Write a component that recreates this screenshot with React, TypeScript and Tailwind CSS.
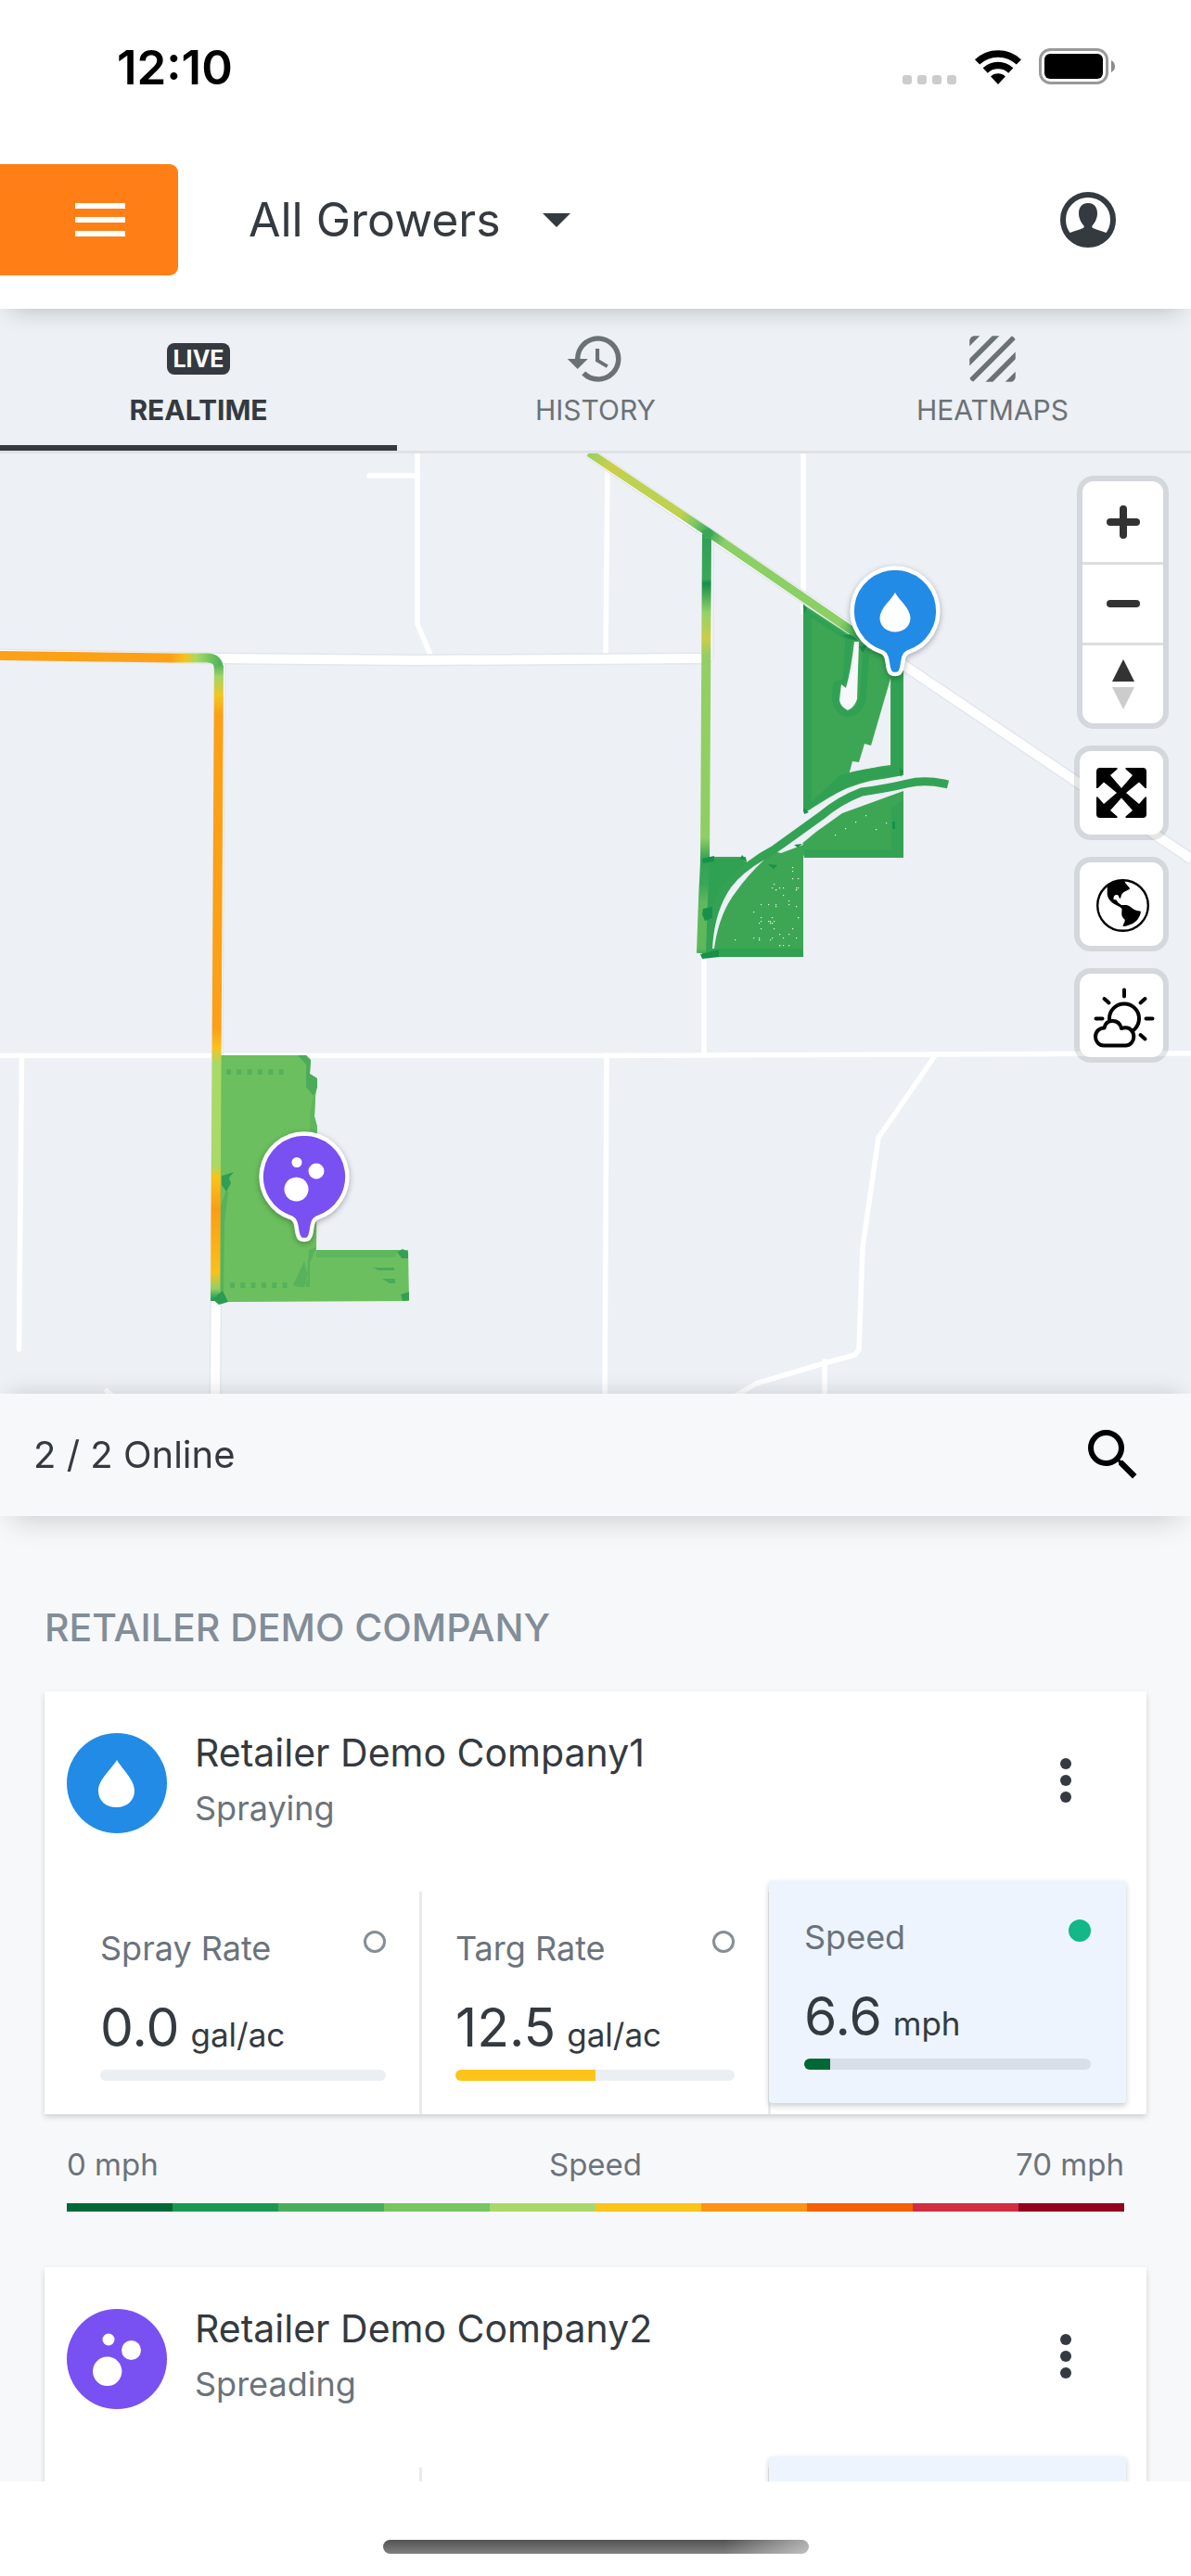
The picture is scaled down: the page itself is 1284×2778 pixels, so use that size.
import React, { useState } from 'react';
import { MdHistory, MdTexture, MdSearch } from 'react-icons/md';

type Kind = 'spray' | 'spread';

interface Metric {
  label: string;
  value: string;
  unit: string;
  percent: number;
  color: string;
}

interface Machine {
  id: string;
  name: string;
  status: string;
  kind: Kind;
  metrics?: Metric[];
}

const machines: Machine[] = [
  {
    id: 'm1',
    name: 'Retailer Demo Company1',
    status: 'Spraying',
    kind: 'spray',
    metrics: [
      { label: 'Spray Rate', value: '0.0', unit: 'gal/ac', percent: 0, color: '#006837' },
      { label: 'Targ Rate', value: '12.5', unit: 'gal/ac', percent: 50, color: '#fcc41b' },
      { label: 'Speed', value: '6.6', unit: 'mph', percent: 9, color: '#006837' },
    ],
  },
  // no readings received yet
  { id: 'm2', name: 'Retailer Demo Company2', status: 'Spreading', kind: 'spread' },
];

const scale = ['#006837', '#1a9850', '#48ae5b', '#76c462', '#a6d96a', '#fcc41b', '#fd9214', '#f66000', '#d22c43', '#930020'];

function StatusBar() {
  return (
    <div className="flex h-36 items-center justify-between pr-[82px] pl-[126px]">
      <span className="text-[51px] leading-none font-semibold text-black">12:10</span>
      <div className="flex items-center">
        <div className="mt-7 flex gap-[6px]">
          {[0, 1, 2, 3].map(i => (
            <span key={i} className="size-[10px] rounded-[3px] bg-[#cccccc]" />
          ))}
        </div>
        <svg viewBox="0 0 50 37" className="ml-5 h-[37px] w-[50px]" aria-hidden="true">
          <g fill="none" stroke="#000" strokeWidth="7.5">
            <path d="M2.6 12.9A32.5 32.5 0 0 1 47.4 12.9" />
            <path d="M11.2 22A20 20 0 0 1 38.8 22" />
          </g>
          <path d="M25 37L17.1 28.4A11.5 11.5 0 0 1 32.9 28.4Z" />
        </svg>
        <svg viewBox="0 0 82 40" className="ml-[19px] h-10 w-[82px]" aria-hidden="true">
          <rect x="1.5" y="1.5" width="72" height="36" rx="11" fill="none" stroke="#999" strokeWidth="3" />
          <rect x="6" y="6" width="63" height="27" rx="6" />
          <path d="M78 13v13q4-2 4-6.500t-4-6.500z" fill="#8c8c8c" />
        </svg>
      </div>
    </div>
  );
}

function Header() {
  return (
    <header className="relative z-20 bg-white shadow-[0_12px_24px_-12px_rgba(0,20,20,0.25)]">
      <StatusBar />
      <div className="flex items-center pt-[33px] pb-9">
        <button aria-label="Menu" className="flex h-[120px] w-48 items-center justify-end rounded-r-[9px] bg-[#ff7f16] pr-[57px]">
          <span className="flex w-[54px] flex-col gap-[9px]">
            <span className="h-[6px] bg-white" />
            <span className="h-[6px] bg-white" />
            <span className="h-[6px] bg-white" />
          </span>
        </button>
        <div className="relative ml-[76px] flex items-center">
          <select aria-label="Grower" className="h-[84px] w-[347px] appearance-none bg-transparent text-[50px] text-[#343a40]">
            <option>All Growers</option>
          </select>
          <svg viewBox="0 0 30 15" className="pointer-events-none absolute right-0 h-[15px] w-[30px]" aria-hidden="true">
            <path d="M0 0H30L15 15Z" fill="#343a40" />
          </svg>
        </div>
        <button aria-label="Account" className="mr-[81px] ml-auto">
          <svg viewBox="0 0 60 60" className="size-[60px]" fill="#343a40">
            <circle cx="30" cy="30" r="27" fill="none" stroke="#343a40" strokeWidth="6" />
            <path d="M30 12C36.500 12 40 16.500 40 23C40 29 37 33.500 34.500 36.500C34 38 34.500 38.500 35.500 39C40 41 46 42.500 50.500 44.500C45.500 52 38.500 57 30 57C21.500 57 14.500 52 9.500 44.500C14 42.500 20 41 24.500 39C25.500 38.500 26 38 25.500 36.500C23 33.500 20 29 20 23C20 16.500 23.500 12 30 12Z" />
          </svg>
        </button>
      </div>
    </header>
  );
}

function Tabs() {
  const [tab, setTab] = useState('REALTIME');
  const tabs = [
    {
      name: 'REALTIME',
      icon: <span className="rounded-lg bg-[#343a40] px-[6px] text-[25px] leading-[34px] font-bold text-white">LIVE</span>,
    },
    { name: 'HISTORY', icon: <MdHistory className="size-[66px]" /> },
    { name: 'HEATMAPS', icon: <MdTexture className="size-[66px]" /> },
  ];

  return (
    <div role="tablist" className="grid grid-cols-3 border-b-3 border-[#dee2e6] bg-[#edf0f5]">
      {tabs.map(t => (
        <button
          key={t.name}
          role="tab"
          aria-selected={t.name === tab}
          onClick={() => setTab(t.name)}
          className={`flex flex-col items-center border-b-6 pt-[21px] pb-4 ${
            t.name === tab ? 'border-[#343a40] font-bold text-[#343a40]' : 'border-transparent text-[#6b7276]'
          }`}
        >
          <span className="flex h-[66px] items-center">{t.icon}</span>
          <span className="text-[30px] leading-[44px]">{t.name}</span>
        </button>
      ))}
    </div>
  );
}

function Pin({ x, y, kind }: { x: number; y: number; kind: Kind }) {
  return (
    <g transform={`translate(${x} ${y})`}>
      <path
        d="M0 -46.500A46.500 46.500 0 0 1 14 44.300C9 47 9 51 7.500 60C6 68 3 68 0 68C-3 68 -6 68 -7.500 60C-9 51 -9 47 -14 44.300A46.500 46.500 0 0 1 0 -46.500Z"
        fill={kind === 'spray' ? '#228be6' : '#7950f2'}
        stroke="#fff"
        strokeWidth="4.500"
        className="drop-shadow-[0_2px_3px_rgba(0,0,0,0.3)]"
      />
      {kind === 'spray' ? (
        <path d="M0 -20C4 -12 16.500 -3 16.500 7.500C16.500 16 9.500 22.500 0 22.500C-9.500 22.500 -16.500 16 -16.500 7.500C-16.500 -3 -4 -12 0 -20Z" fill="#fff" />
      ) : (
        <g fill="#fff">
          <circle cx="-8" cy="-15.500" r="5.500" />
          <circle cx="13" cy="-6" r="8.500" />
          <circle cx="-8.500" cy="13.500" r="13" />
        </g>
      )}
    </g>
  );
}

// small unpainted gaps inside the covered area
const gaps = Array.from({ length: 90 }, (_, i) => ({
  x: 780 + ((i * 37 + i * i * 3) % 82),
  y: 935 + ((i * 53 + i * i * 5) % 90),
})).filter(g => g.y > 1040 - (g.x - 770) * 1.5);

const dashes = [0, 1, 2, 3, 4, 5];

function FieldMap() {
  return (
    <svg viewBox="0 489 1284 1014" preserveAspectRatio="xMidYMid slice" className="absolute inset-0 h-full w-full" aria-label="Coverage map">
      <defs>
        <linearGradient id="approach" gradientUnits="userSpaceOnUse" x1="0" y1="0" x2="238" y2="0">
          <stop offset="0.770" stopColor="#fca016" />
          <stop offset="0.840" stopColor="#f3c31f" />
          <stop offset="0.890" stopColor="#a8d968" />
          <stop offset="1" stopColor="#4fb35a" />
        </linearGradient>
        <linearGradient id="haul" gradientUnits="userSpaceOnUse" x1="0" y1="716" x2="0" y2="1400">
          <stop offset="0" stopColor="#4fb35a" />
          <stop offset="0.020" stopColor="#a0d666" />
          <stop offset="0.050" stopColor="#f6c51f" />
          <stop offset="0.080" stopColor="#fca016" />
          <stop offset="0.575" stopColor="#fca016" />
          <stop offset="0.605" stopColor="#fbc21a" />
          <stop offset="0.630" stopColor="#a9d967" />
          <stop offset="0.790" stopColor="#a9d967" />
          <stop offset="0.810" stopColor="#fbc21a" />
          <stop offset="0.860" stopColor="#fc9d14" />
          <stop offset="0.960" stopColor="#fbc01a" />
          <stop offset="0.985" stopColor="#93cf64" />
          <stop offset="1" stopColor="#2f9f55" />
        </linearGradient>
        <linearGradient id="highway" gradientUnits="userSpaceOnUse" x1="635" y1="488" x2="965" y2="711">
          <stop offset="0" stopColor="#94d264" />
          <stop offset="0.070" stopColor="#cfcd45" />
          <stop offset="0.120" stopColor="#bfd150" />
          <stop offset="0.300" stopColor="#bfd150" />
          <stop offset="0.340" stopColor="#84ca64" />
          <stop offset="0.390" stopColor="#3aa757" />
          <stop offset="0.440" stopColor="#8ccf65" />
          <stop offset="0.820" stopColor="#8ccf65" />
          <stop offset="0.880" stopColor="#3aa757" />
          <stop offset="1" stopColor="#2f9f55" />
        </linearGradient>
        <linearGradient id="lane" gradientUnits="userSpaceOnUse" x1="0" y1="574" x2="0" y2="1032">
          <stop offset="0" stopColor="#2f9f55" />
          <stop offset="0.110" stopColor="#3aa757" />
          <stop offset="0.120" stopColor="#158f4a" />
          <stop offset="0.190" stopColor="#93d367" />
          <stop offset="0.250" stopColor="#cbcd48" />
          <stop offset="0.290" stopColor="#93cf64" />
          <stop offset="0.720" stopColor="#8fce64" />
          <stop offset="0.770" stopColor="#35a055" />
          <stop offset="0.830" stopColor="#3aa757" />
          <stop offset="0.870" stopColor="#5fb85c" />
          <stop offset="0.980" stopColor="#5fb85c" />
          <stop offset="1" stopColor="#2f9f55" />
        </linearGradient>
      </defs>

      {/* Roads */}
      <g fill="none" stroke="#fff" strokeWidth="5.500" strokeLinecap="round" strokeLinejoin="round">
        <path d="M450 480V673L464 706" />
        <path d="M398 513H450" />
        <path d="M655 500L653 706" />
        <path d="M866 480V660" />
        <path d="M0 1138.500H642L1284 1136" />
        <path d="M759 1020V1138" />
        <path d="M654 1138L652 1510" />
        <path d="M1009 1137L947 1227L930 1345L926 1455L922 1461L889 1470L815 1492L792 1506" />
        <path d="M889 1468V1510" />
        <path d="M23.500 1138L20.500 1455" />
        <path d="M115 1500L122 1506" />
      </g>
      <g fill="none" stroke="#e2e7ee" strokeWidth="13">
        <path d="M0 706L236 710L450 712L762 710" />
        <path d="M635 488L762 574L965 711L1284 926" />
        <path d="M237 710L232 1510" />
        <path d="M763 580V712" />
      </g>
      <g fill="none" stroke="#fff" strokeWidth="10">
        <path d="M0 706L236 710L450 712L762 710" />
        <path d="M635 488L762 574L965 711L1284 926" />
        <path d="M237 710L232 1510" />
        <path d="M763 580V712" />
      </g>

      {/* Spreading coverage */}
      <path d="M238 1138H330L335 1143L334 1158L342 1163L342 1172L340 1183L339 1204L342 1215L341 1348H440L441 1403L236 1404Z" fill="#6cbf5f" />
      <path d="M330 1138L335 1143L334 1158L342 1163L342 1172L338 1182L330 1172V1148L321 1138Z" fill="#4bab59" />
      <path d="M338 1182L340 1183L339 1204L342 1215V1240H334V1200Z" fill="#5fb75c" />
      <path d="M239 1268L252 1264L247 1270L249 1276L244 1285L239 1278Z" fill="#2f9f55" />
      <path d="M244 1283L246 1286L242 1320L241 1404H238V1300Z" fill="#58b25b" />
      <path d="M333 1348L341 1345L334 1362V1388H328L332 1378L328 1360L316 1386L322 1388H330Z" fill="#57b25b" />
      <path d="M428 1350L434 1347L440 1350V1357H433Z" fill="#35a055" />
      <path d="M432 1396L441 1393V1402L434 1403Z" fill="#35a055" />
      <path d="M341 1348H430L426 1356H341Z" fill="#5fb75c" />
      <path d="M402 1367H425V1370H408ZM412 1379H426V1384H420Z" fill="#49ab5a" />
      <g fill="#55b15b">
        {dashes.map(i => (
          <React.Fragment key={i}>
            <rect x={244 + i * 11.300} y="1153" width="5" height="6" />
            <rect x={248 + i * 11.300} y="1383" width="5" height="6" />
          </React.Fragment>
        ))}
      </g>
      <path d="M0 707L185 709.500H222Q236 709 236 722" fill="none" stroke="url(#approach)" strokeWidth="10" />
      <path d="M236 718L234.500 980L232 1403" fill="none" stroke="url(#haul)" strokeWidth="10" />
      <path d="M229 1401L240 1392L246 1404L236 1407Z" fill="#2a9b53" />

      {/* Spraying coverage */}
      <path
        d="M866 652L924 690L950 705L965 712L974 722V836L958 839Q925 843 903 855C890 862 880 869 868 876L866 875ZM960 732L939 804L932 802L926 822L919 821L915 836Q938 827 960 825Z"
        fillRule="evenodd"
        fill="#3ca655"
      />
      <path d="M866 660H875V872L866 876ZM961 726H973V836H961ZM868 656L914 686L922 696L912 690L868 662Z" fill="#30a153" />
      <path d="M915 690L912 735L902 738Q896 765 914 770Q930 768 931 745L934 700" fill="none" stroke="#30a153" strokeWidth="7" />
      <path d="M921 692H926L924 754Q921 763 914 766Q906 762 905 755L907 738L912 742Q918 720 921 692Z" fill="#f6f8fb" />
      <path d="M905 836Q935 827 961 827H972V836L958 838Q925 842 903 854C890 861 880 868 868 875L874 866Z" fill="#30a153" />
      <path d="M974 853L941 865L908 877L880 897L863 911L867 925H974Z" fill="#3ca655" />
      <path d="M867 916H961V872L974 862V925H867Z" fill="#34a254" />
      <path d="M757 924H804L806 935L840 918L866 911V1032H757Z" fill="#3ca655" />
      <path d="M757 1023H866V1032H757ZM758 926H800L806 935L778 960L767 1000H758Z" fill="#30a153" />
      <path
        d="M1022 846Q998 840 978 845T929 854Q905 863 885 880L835 916Q806 931 785 955Q768 975 764 1025"
        fill="none"
        stroke="#33a254"
        strokeWidth="9"
      />
      <path d="M863 903L838 919L842 920L866 911Z" fill="#edf0f5" />
      <path d="M824 927Q800 941 788 957Q770 983 768 1023L770 1023Q775 985 794 961Q806 944 824 927Z" fill="#edf0f5" />
      <g fill="#eaf5ec">
        {gaps.map((g, i) => (
          <rect key={i} x={g.x} y={g.y} width="1.200" height="1.200" />
        ))}
        {dashes.map(i => (
          <rect key={i} x={900 + i * 11} y={900 - ((i * 7) % 22)} width="1.200" height="1.200" />
        ))}
      </g>
      <path d="M762 576L760 930L758 970L756 1028" fill="none" stroke="url(#lane)" strokeWidth="10" />
      <g fill="#17904a">
        <path d="M908 685L918 684L926 691L915 689ZM926 697L935 696L930 704Z" />
        <path d="M758 980L768 978V990L760 993L757 986Z" />
        <path d="M755 1029L775 1024V1032L757 1034Z" />
        <path d="M757 926L770 923V929L758 931ZM800 922L805 928L798 926Z" />
        <path d="M866 651L870 656L867 661ZM866 871L872 876L867 878ZM970 828L974 832L971 838Z" />
        <path d="M962 886H965V894H962ZM828 932L838 933L834 937ZM856 911L865 910L860 914Z" />
      </g>
      <path d="M635 488L762 573L930 688L965 713" fill="none" stroke="url(#highway)" strokeWidth="9" />
      <path d="M757 572L764 570L769 576L765 581H758Z" fill="#3aa757" />

      <Pin x={965} y={659} kind="spray" />
      <Pin x={328} y={1269} kind="spread" />
    </svg>
  );
}

function ExpandIcon() {
  return (
    <svg viewBox="0 0 54 54" className="size-[54px]" aria-hidden="true">
      <path d="M4 0H22.500V1.500L15 8L27 22L39 8L31.500 1.500V0H50Q54 0 54 4V22H52.500L46 15.500L32 27L46 39L52.500 31.500H54V50Q54 54 50 54H31.500V52.500L39 46L27 32.500L15 46L22.500 52.500V54H4Q0 54 0 50V31.500H1.500L8 39L22 27L8 15.500L1.500 22H0V4Q0 0 4 0Z" />
    </svg>
  );
}

function GlobeIcon() {
  return (
    <svg viewBox="0 0 90 90" className="size-[90px]" aria-hidden="true">
      <circle cx="46.500" cy="46.500" r="27.300" fill="none" stroke="#000" strokeWidth="2.400" />
      <path d="M29.700 27C31 23 36 20.500 41 19.500L48 19.500L49.500 22.500L54.300 28.300C52 30.500 48 31 46.500 33C44.500 34.500 45 37 43.700 39C42 38.500 42.500 35.500 40.500 35C38 34.500 36 36.500 36.500 40L39.500 40.500L41.500 43.500L45 46L50.500 46C54 46.500 55.500 49 59 51C61.500 52.500 64.500 52 66 53C65 60 60.500 64.500 56 66.500C53 67.500 50 69.500 46.500 69C47 66 49.500 63.500 48.500 61.500C44 58 45.500 54 45.500 50C43 47.500 39.500 46 36.500 44.500C33 42 30 38.500 29.700 34Z" />
    </svg>
  );
}

function WeatherIcon() {
  return (
    <svg viewBox="0 0 90 90" className="size-[90px]" fill="none" stroke="#000" strokeWidth="4" strokeLinecap="round" strokeLinejoin="round" aria-hidden="true">
      <circle cx="48" cy="48.500" r="16" />
      <path d="M48 17.500V24.500M26.500 27L31.500 31.500M70.500 27L65.500 31.500M17.500 48.500H24.500M71.500 48.500H78.500M65.500 66L70.500 70.500" />
      <path
        d="M26 77.500C20.500 77.500 17 73 17 68C17 62.500 21 58.700 26.500 58.500C27.500 53.500 31 51 35.500 51C40 51 43.700 54 45 59C46.500 58.500 48 58.300 49.500 58.300C54.500 58.300 58.300 62.500 58.300 68C58.300 73 54.500 77.500 49.500 77.500Z"
        fill="#fff"
      />
    </svg>
  );
}

function MapControls() {
  const box = 'border-6 border-black/10 bg-white bg-clip-padding rounded-[18px]';
  return (
    <div className="absolute top-6 right-6 flex flex-col items-end gap-[18px]">
      <div className={`flex w-[99px] flex-col ${box}`}>
        <button aria-label="Zoom in" className="flex h-[87px] items-center justify-center">
          <svg viewBox="0 0 36 36" className="size-9" stroke="#333" strokeWidth="8" strokeLinecap="round">
            <path d="M4 18H32M18 4V32" />
          </svg>
        </button>
        <button aria-label="Zoom out" className="flex h-[87px] items-center justify-center border-t-3 border-[#dddddd]">
          <svg viewBox="0 0 36 36" className="size-9" stroke="#333" strokeWidth="8" strokeLinecap="round">
            <path d="M4 18H32" />
          </svg>
        </button>
        <button aria-label="Reset bearing" className="flex h-[87px] items-center justify-center border-t-3 border-[#dddddd]">
          <svg viewBox="0 0 24 54" className="h-[54px] w-6">
            <path d="M12 0L24 24H0Z" fill="#333" />
            <path d="M12 54L24 30H0Z" fill="#ccc" />
          </svg>
        </button>
      </div>
      <button aria-label="Fit to machines" className={`flex size-[102px] items-center justify-center ${box}`}>
        <ExpandIcon />
      </button>
      <button aria-label="Satellite view" className={`size-[102px] ${box}`}>
        <GlobeIcon />
      </button>
      <button aria-label="Weather" className={`size-[102px] ${box}`}>
        <WeatherIcon />
      </button>
    </div>
  );
}

function Avatar({ kind }: { kind: Kind }) {
  return (
    <svg viewBox="0 0 108 108" className="mt-[9px] size-[108px] shrink-0" aria-hidden="true">
      <circle cx="54" cy="54" r="54" fill={kind === 'spray' ? '#228be6' : '#7950f2'} />
      {kind === 'spray' ? (
        <path d="M54 29C59 38 73 50 73 62C73 73 64.500 80 53.500 80C42 80 34 73 34 62C34 50 49 38 54 29Z" fill="#fff" />
      ) : (
        <g fill="#fff">
          <circle cx="45" cy="33" r="6.500" />
          <circle cx="69.500" cy="44.500" r="10.500" />
          <circle cx="43.700" cy="67.300" r="15.700" />
        </g>
      )}
    </svg>
  );
}

function MachineCard({ machine }: { machine: Machine }) {
  const [selected, setSelected] = useState(2);
  const { metrics } = machine;
  return (
    <article className="mb-[60px]">
      <div className="bg-white shadow-[0_3px_6px_rgba(0,0,0,0.16)]">
        <div className="flex items-start px-6 pt-9 pb-[60px]">
          <Avatar kind={machine.kind} />
          <div className="ml-[30px]">
            <h3 className="text-[41px] leading-[60px] text-[#343a40]">{machine.name}</h3>
            <p className="text-[36px] leading-[60px] text-[#6b737b]">{machine.status}</p>
          </div>
          <button aria-label="More" className="mr-[57px] ml-auto flex flex-col gap-[6px] self-center">
            <span className="size-3 rounded-full bg-[#343a40]" />
            <span className="size-3 rounded-full bg-[#343a40]" />
            <span className="size-3 rounded-full bg-[#343a40]" />
          </button>
        </div>
        <div className="grid grid-cols-[383fr_376fr_381fr] px-6">
          {[0, 1, 2].map(i => {
            const m = metrics?.[i];
            const active = i === selected;
            return (
              <div key={i} className={i < 2 ? 'border-r-3 border-[#e9eaeb]' : ''}>
                <label
                  className={`block min-h-[240px] pt-[39px] pb-9 ${
                    active ? 'relative -mx-[2px] -translate-y-3 rounded-[3px] bg-[#edf4fd] px-[38px] shadow-[0_3px_6px_rgba(0,0,0,0.2)]' : 'px-9'
                  }`}
                >
                  {m && (
                    <>
                      <span className="flex items-start justify-between">
                        <span className="text-[36px] leading-[45px] text-[#6b737b]">{m.label}</span>
                        <input
                          type="radio"
                          name={machine.id}
                          checked={active}
                          onChange={() => setSelected(i)}
                          className="mt-[3px] size-6 appearance-none rounded-full border-3 border-[#868e96] checked:border-[#12b886] checked:bg-[#12b886]"
                        />
                      </span>
                      <span className="mt-[27px] flex items-baseline gap-3 text-[#343a40]">
                        <span className="text-[57px] leading-[72px]">{m.value}</span>
                        <span className="text-[35px] leading-none">{m.unit}</span>
                      </span>
                      <span className={`mt-[9px] block h-3 overflow-hidden rounded-full ${active ? 'bg-[#dadee7]' : 'bg-[#ebeff4]'}`}>
                        <span className="block h-full" style={{ width: `${m.percent}%`, backgroundColor: m.color }} />
                      </span>
                    </>
                  )}
                </label>
              </div>
            );
          })}
        </div>
      </div>
      {metrics && (
        <div className="px-6 pt-[30px]">
          <div className="grid grid-cols-3 text-[33px] leading-[48px] text-[#6b737b]">
            <span>0 mph</span>
            <span className="text-center">{metrics[selected].label}</span>
            <span className="text-right">70 mph</span>
          </div>
          <div className="mt-[18px] flex h-[9px]">
            {scale.map(c => (
              <span key={c} className="flex-1" style={{ backgroundColor: c }} />
            ))}
          </div>
        </div>
      )}
    </article>
  );
}

export default function App() {
  return (
    <div className="flex h-screen flex-col overflow-hidden bg-white font-['Inter',sans-serif]">
      <Header />
      <Tabs />

      <main className="flex min-h-0 flex-1 flex-col">
        <section className="relative min-h-0 grow-[1014] basis-0 overflow-hidden bg-[#edf0f5]">
          <FieldMap />
          <MapControls />
        </section>

        <div className="relative z-10 flex h-[132px] items-center justify-between bg-[#f7f8fa] pr-12 pl-9 shadow-[0_15px_30px_-12px_rgba(0,20,20,0.2),0_-9px_24px_-12px_rgba(0,20,20,0.2)]">
          <h1 className="text-[40px] text-[#343a40]">2 / 2 Online</h1>
          <button aria-label="Search">
            <MdSearch className="size-[72px] text-black" />
          </button>
        </div>

        {/* Machine list */}
        <section className="min-h-0 grow-[1041] basis-0 overflow-y-auto bg-[#f7f8fa] [scrollbar-width:none]">
          <div className="px-12 pt-[90px]">
            <h2 className="mb-[39px] text-[41px] leading-[60px] font-medium text-[#828d98]">RETAILER DEMO COMPANY</h2>
            {machines.map(m => (
              <MachineCard key={m.id} machine={m} />
            ))}
          </div>
        </section>
      </main>

      <footer className="flex h-[102px] items-end justify-center bg-white pb-6">
        <div className="h-[15px] w-[459px] rounded-full bg-[linear-gradient(to_right,transparent_80%,#ffffff80),linear-gradient(#525252,#808080)]" />
      </footer>
    </div>
  );
}
